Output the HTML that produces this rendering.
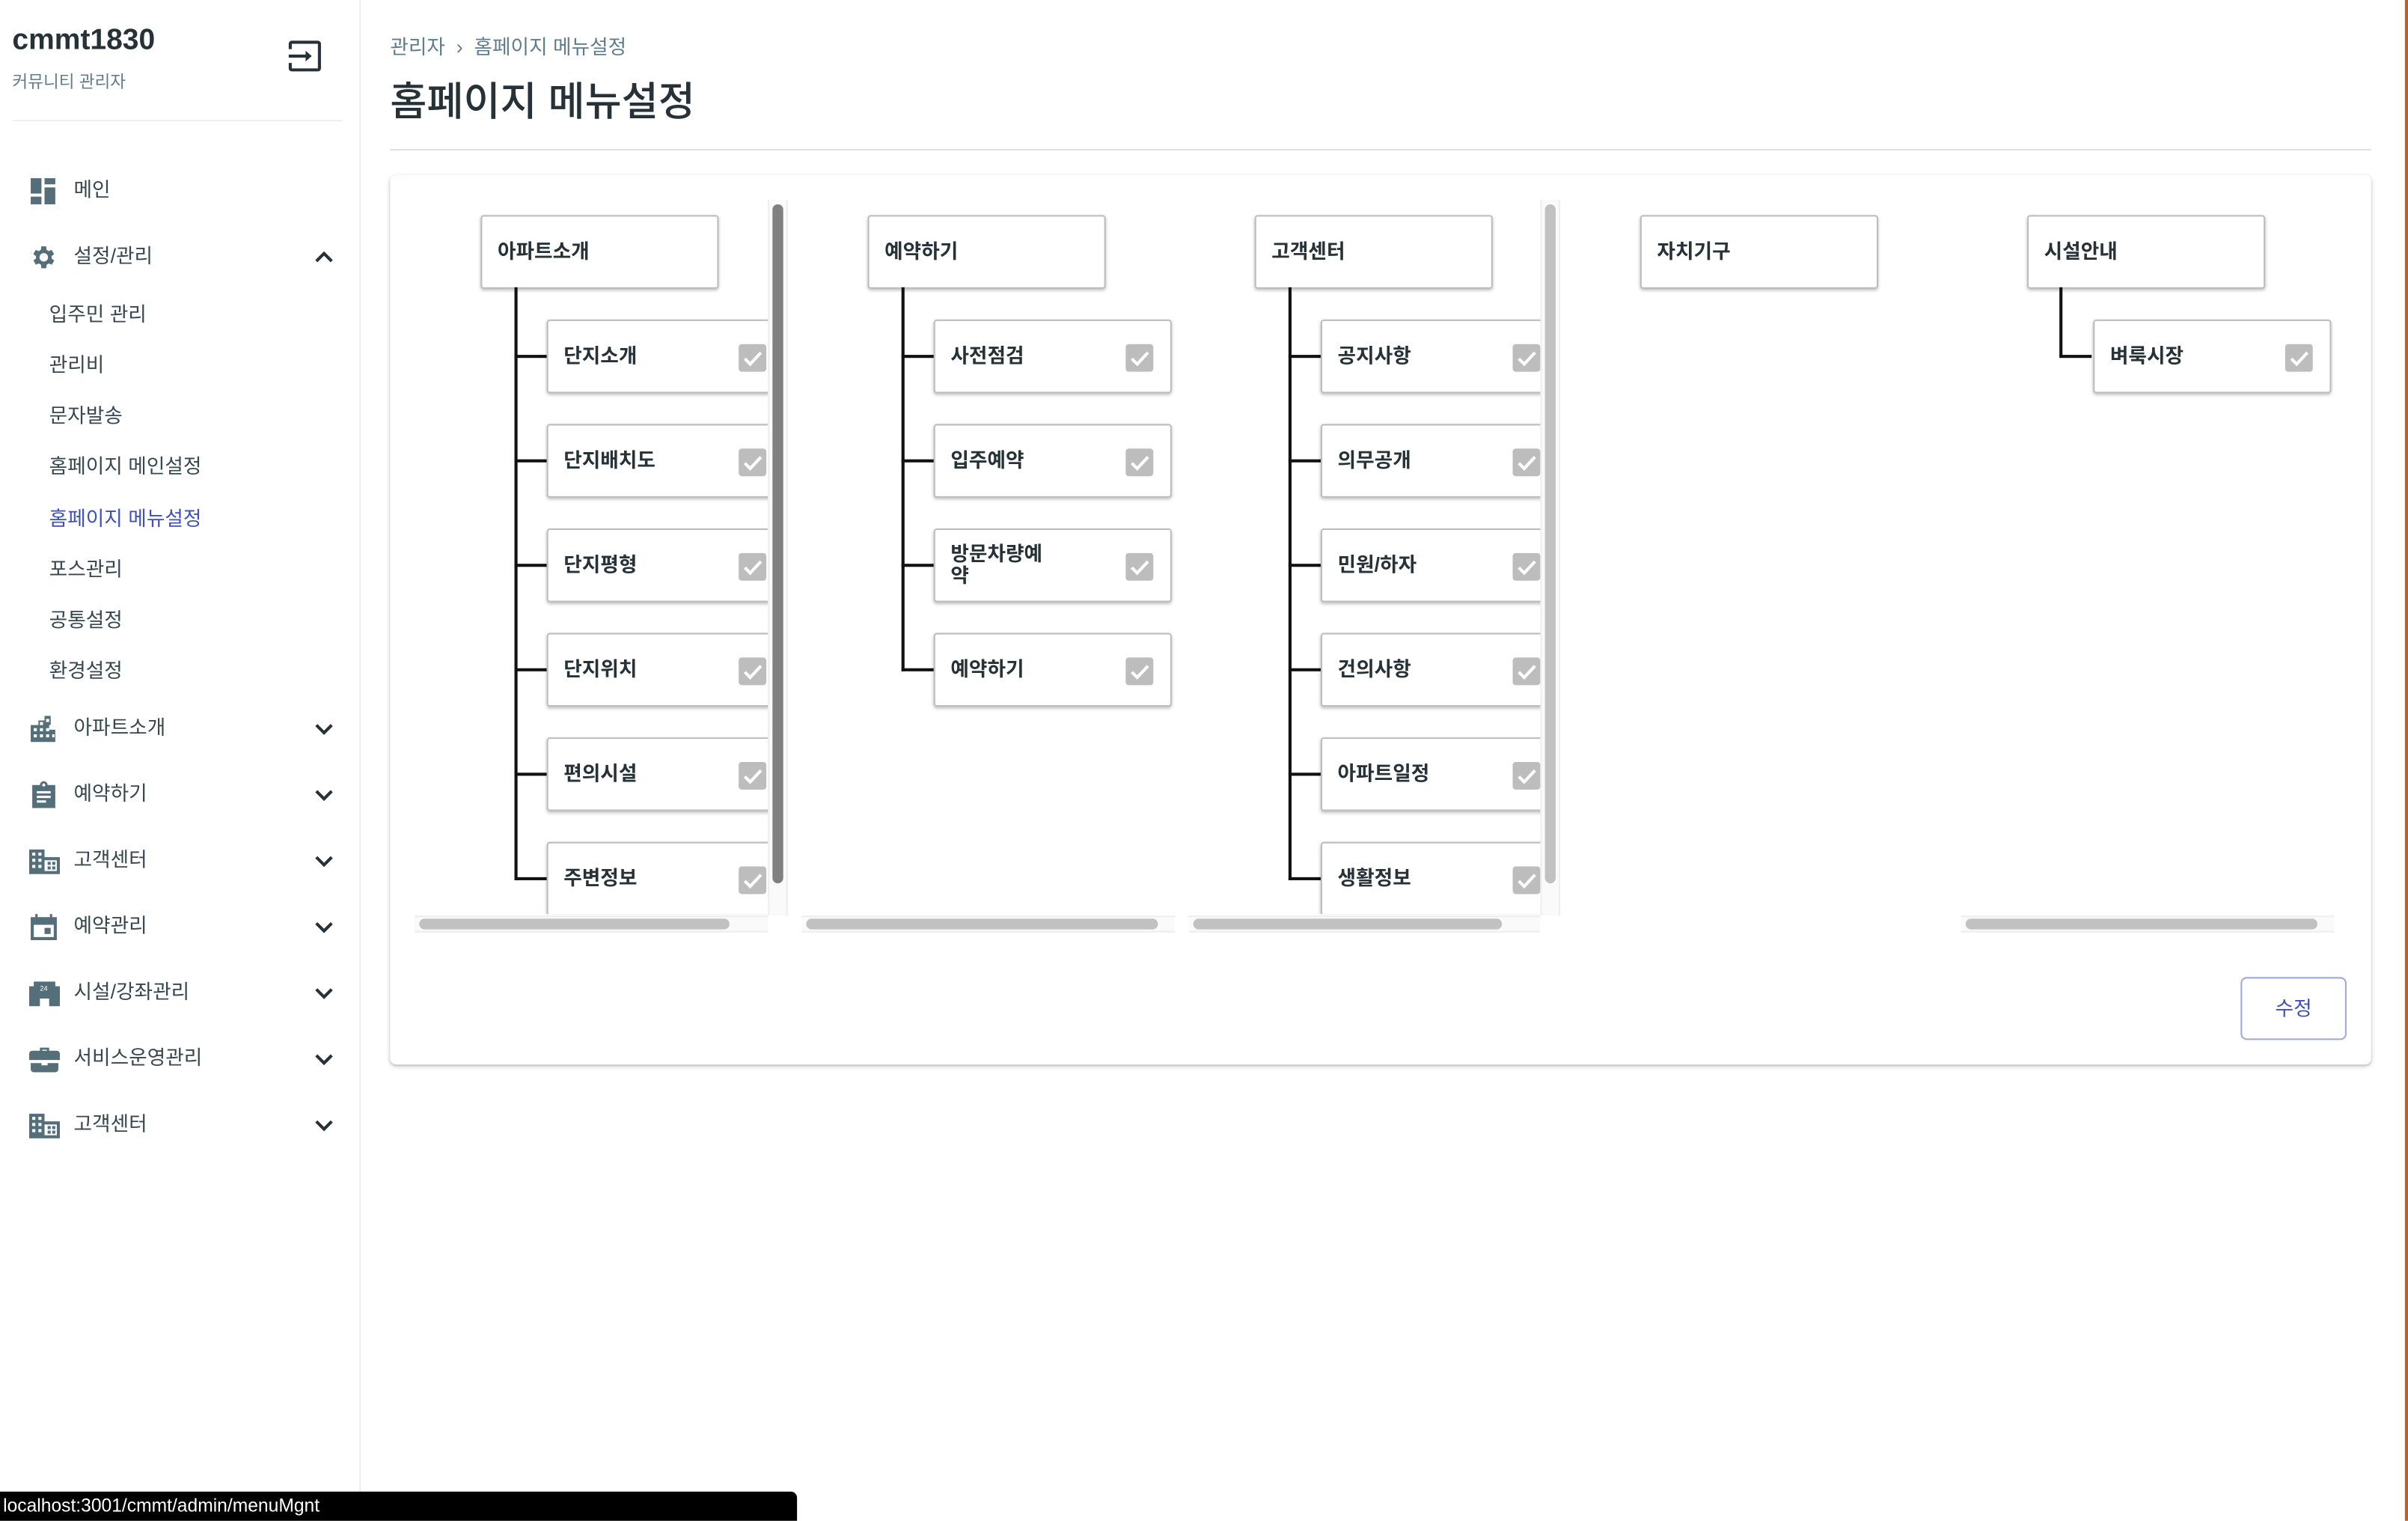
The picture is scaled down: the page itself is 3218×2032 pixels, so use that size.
<!DOCTYPE html>
<html><head><meta charset="utf-8">
<style>
*{box-sizing:border-box;margin:0;padding:0}
html,body{width:3218px;height:2032px;overflow:hidden;background:#fff}
#w{position:absolute;left:0;top:0;width:1568px;height:990px;transform:scale(2.05230);transform-origin:0 0;font-family:"Liberation Sans","Noto Sans CJK KR",sans-serif;color:#263238}
.a{position:absolute}
.side{left:0;top:0;width:235px;height:990px;border-right:1px solid #eee}
.mi{position:absolute;left:48px;font-size:13px;color:#37474f;line-height:16px}
.ic{position:absolute;left:19px;width:19px;height:19px}
.sub{position:absolute;left:32px;font-size:13px;color:#37474f;line-height:16px}
.chev{position:absolute;left:204px;width:14px;height:10px}
.col{position:absolute;top:130px;height:465px;overflow:hidden}
.box{position:absolute;width:155px;height:48px;background:#fff;border:1px solid #bdbdbd;border-radius:2px;box-shadow:0 1px 2px rgba(0,0,0,.25);font-size:13px;font-weight:bold;color:#263238}
.box span{position:absolute;left:10px;top:50%;transform:translateY(-50%);width:62px;line-height:14px}
.cb{position:absolute;left:124px;top:15px;width:18px;height:18px;background:#bdbdbd;border-radius:2px}
.vl{position:absolute;width:1.5px;background:#111}
.hl{position:absolute;height:1.5px;background:#111;width:21px}
.ht{position:absolute;top:596px;height:11px;background:#fafafa;border-top:1px solid #eee;border-bottom:1px solid #eee}
.th{position:absolute;top:598px;height:7px;border-radius:4px;background:#c1c1c1}
.vt{position:absolute;top:130px;width:13px;height:466px;background:#fafafa;border-left:1px solid #eee;border-right:1px solid #eee}
</style></head><body><div id="w">
<div class="a side">
<div class="a" style="left:8px;top:16px;font-size:19px;font-weight:bold;color:#263238">cmmt1830</div>
<div class="a" style="left:8px;top:45px;font-size:11px;color:#607d8b">커뮤니티 관리자</div>
<svg class="a" style="left:186px;top:25px" width="26" height="24" viewBox="0 0 26 24"><path d="M3 7V3.5a1 1 0 0 1 1-1h17a1 1 0 0 1 1 1v16a1 1 0 0 1-1 1H4a1 1 0 0 1-1-1V16" fill="none" stroke="#263238" stroke-width="2"/><path d="M2 11.5h12" stroke="#263238" stroke-width="2"/><path d="M13 8l4 3.5-4 3.5z" fill="#263238"/></svg>
<div class="a" style="left:8px;top:78px;width:215px;height:1px;background:#eee"></div>

<svg class="ic" style="top:115px" viewBox="0 0 19 19" fill="#546e7a"><rect x="1" y="1" width="7" height="10"/><rect x="10" y="1" width="7" height="4"/><rect x="10" y="7" width="7" height="11"/><rect x="1" y="13" width="7" height="5"/></svg>
<div class="mi" style="top:116px">메인</div>

<svg class="ic" style="top:158px" viewBox="0 0 24 24" fill="#546e7a"><path d="M19.4 13a7.5 7.5 0 0 0 0-2l2.1-1.6-2-3.5-2.5 1a7.6 7.6 0 0 0-1.7-1L15 3h-4l-.4 2.9a7.6 7.6 0 0 0-1.7 1l-2.5-1-2 3.5L6.6 11a7.5 7.5 0 0 0 0 2l-2.1 1.6 2 3.5 2.5-1a7.6 7.6 0 0 0 1.7 1L11 21h4l.4-2.9a7.6 7.6 0 0 0 1.7-1l2.5 1 2-3.5zM13 15.5a3.5 3.5 0 1 1 0-7 3.5 3.5 0 0 1 0 7z" transform="translate(-1 0)"/></svg>
<div class="mi" style="top:159px">설정/관리</div>
<svg class="chev" style="top:162px" viewBox="0 0 14 10"><path d="M2 8l5-5 5 5" fill="none" stroke="#263238" stroke-width="2"/></svg>

<div class="sub" style="top:197px">입주민 관리</div>
<div class="sub" style="top:230px">관리비</div>
<div class="sub" style="top:263px">문자발송</div>
<div class="sub" style="top:296px">홈페이지 메인설정</div>
<div class="sub" style="top:330px;color:#3f51b5">홈페이지 메뉴설정</div>
<div class="sub" style="top:363px">포스관리</div>
<div class="sub" style="top:396px">공통설정</div>
<div class="sub" style="top:429px">환경설정</div>

<svg class="ic" style="top:465px" viewBox="0 0 19 19" fill="#546e7a"><path d="M1 7h5V4h4V1h4v6h-1v3h4v8H1z"/><g fill="#fff"><rect x="3" y="9" width="2" height="2"/><rect x="7" y="9" width="2" height="2"/><rect x="11" y="9" width="2" height="2"/><rect x="3" y="13" width="2" height="2"/><rect x="7" y="13" width="2" height="2"/><rect x="11" y="13" width="2" height="2"/><rect x="15" y="13" width="1.5" height="2"/><rect x="7" y="5" width="2" height="2"/><rect x="11" y="3" width="2" height="2"/></g></svg>
<div class="mi" style="top:466px">아파트소개</div>
<svg class="chev" style="top:470px" viewBox="0 0 14 10"><path d="M2 2l5 5 5-5" fill="none" stroke="#263238" stroke-width="2"/></svg>

<svg class="ic" style="top:508px" viewBox="0 0 19 19" fill="#546e7a"><path d="M2 3h5a2.5 2.5 0 0 1 5 0h5v15H2z"/><g fill="#fff"><circle cx="9.5" cy="3" r="1"/><rect x="5" y="7" width="9" height="1.5"/><rect x="5" y="10" width="9" height="1.5"/><rect x="5" y="13" width="6" height="1.5"/></g></svg>
<div class="mi" style="top:509px">예약하기</div>
<svg class="chev" style="top:513px" viewBox="0 0 14 10"><path d="M2 2l5 5 5-5" fill="none" stroke="#263238" stroke-width="2"/></svg>

<svg class="ic" style="top:551px;width:20px" viewBox="0 0 20 19" fill="#546e7a"><path d="M0 2h10v5h10v11H0z"/><g fill="#fff"><rect x="2" y="4" width="2" height="2"/><rect x="6" y="4" width="2" height="2"/><rect x="2" y="8" width="2" height="2"/><rect x="6" y="8" width="2" height="2"/><rect x="2" y="12" width="2" height="2"/><rect x="6" y="12" width="2" height="2"/><rect x="10" y="9" width="8" height="7"/></g><g><rect x="12" y="10" width="2" height="2"/><rect x="15" y="10" width="2" height="2"/><rect x="12" y="13" width="2" height="2"/><rect x="15" y="13" width="2" height="2"/></g></svg>
<div class="mi" style="top:552px">고객센터</div>
<svg class="chev" style="top:556px" viewBox="0 0 14 10"><path d="M2 2l5 5 5-5" fill="none" stroke="#263238" stroke-width="2"/></svg>

<svg class="ic" style="top:594px" viewBox="0 0 19 19" fill="#546e7a"><path d="M1 3h3V1h1.5v2h8V1H15v2h3v15H1zM3 8v8h13V8z"/><rect x="10" y="10" width="4" height="4"/></svg>
<div class="mi" style="top:595px">예약관리</div>
<svg class="chev" style="top:599px" viewBox="0 0 14 10"><path d="M2 2l5 5 5-5" fill="none" stroke="#263238" stroke-width="2"/></svg>

<svg class="ic" style="top:637px;width:20px" viewBox="0 0 20 19" fill="#546e7a"><path d="M0 5h3V2h14v3h3v13h-7v-5H7v5H0z"/><text x="7" y="8" font-size="4.5" fill="#fff" font-family="Liberation Sans">24</text></svg>
<div class="mi" style="top:638px">시설/강좌관리</div>
<svg class="chev" style="top:642px" viewBox="0 0 14 10"><path d="M2 2l5 5 5-5" fill="none" stroke="#263238" stroke-width="2"/></svg>

<svg class="ic" style="top:680px;width:20px" viewBox="0 0 20 19" fill="#546e7a"><path d="M7 2h6v2h5a2 2 0 0 1 2 2v4H0V6a2 2 0 0 1 2-2h5zM8.5 3.3V4h3v-.7zM1 12h7v1.5h4V12h7v4a2 2 0 0 1-2 2H3a2 2 0 0 1-2-2z"/></svg>
<div class="mi" style="top:681px">서비스운영관리</div>
<svg class="chev" style="top:685px" viewBox="0 0 14 10"><path d="M2 2l5 5 5-5" fill="none" stroke="#263238" stroke-width="2"/></svg>

<svg class="ic" style="top:723px;width:20px" viewBox="0 0 20 19" fill="#546e7a"><path d="M0 2h10v5h10v11H0z"/><g fill="#fff"><rect x="2" y="4" width="2" height="2"/><rect x="6" y="4" width="2" height="2"/><rect x="2" y="8" width="2" height="2"/><rect x="6" y="8" width="2" height="2"/><rect x="2" y="12" width="2" height="2"/><rect x="6" y="12" width="2" height="2"/><rect x="10" y="9" width="8" height="7"/></g><g><rect x="12" y="10" width="2" height="2"/><rect x="15" y="10" width="2" height="2"/><rect x="12" y="13" width="2" height="2"/><rect x="15" y="13" width="2" height="2"/></g></svg>
<div class="mi" style="top:724px">고객센터</div>
<svg class="chev" style="top:728px" viewBox="0 0 14 10"><path d="M2 2l5 5 5-5" fill="none" stroke="#263238" stroke-width="2"/></svg>
</div>

<div class="a" style="left:254px;top:20px;font-size:13px;color:#607d8b">관리자 &nbsp;›&nbsp; 홈페이지 메뉴설정</div>
<div class="a" style="left:254px;top:46px;font-size:26px;font-weight:500;color:#263238">홈페이지 메뉴설정</div>
<div class="a" style="left:254px;top:97px;width:1290px;height:1px;background:#e0e0e0"></div>

<div class="a" style="left:254px;top:114px;width:1290px;height:579px;background:#fff;border-radius:4px;box-shadow:0 1px 3px rgba(0,0,0,.2),0 1px 1px rgba(0,0,0,.1)"></div>

<!-- col1 -->
<div class="col" style="left:270px;width:230px">
 <div class="box" style="left:43px;top:10px"><span>아파트소개</span></div>
 <div class="vl" style="left:65px;top:57px;height:386px"></div>
 <div class="hl" style="left:65px;top:101px"></div><div class="box" style="left:86px;top:78px"><span>단지소개</span><svg class="cb" viewBox="0 0 18 18"><path d="M4 9.5l3.5 3.5L14.5 5.5" fill="none" stroke="#fff" stroke-width="2"/></svg></div>
 <div class="hl" style="left:65px;top:169px"></div><div class="box" style="left:86px;top:146px"><span>단지배치도</span><svg class="cb" viewBox="0 0 18 18"><path d="M4 9.5l3.5 3.5L14.5 5.5" fill="none" stroke="#fff" stroke-width="2"/></svg></div>
 <div class="hl" style="left:65px;top:237px"></div><div class="box" style="left:86px;top:214px"><span>단지평형</span><svg class="cb" viewBox="0 0 18 18"><path d="M4 9.5l3.5 3.5L14.5 5.5" fill="none" stroke="#fff" stroke-width="2"/></svg></div>
 <div class="hl" style="left:65px;top:305px"></div><div class="box" style="left:86px;top:282px"><span>단지위치</span><svg class="cb" viewBox="0 0 18 18"><path d="M4 9.5l3.5 3.5L14.5 5.5" fill="none" stroke="#fff" stroke-width="2"/></svg></div>
 <div class="hl" style="left:65px;top:373px"></div><div class="box" style="left:86px;top:350px"><span>편의시설</span><svg class="cb" viewBox="0 0 18 18"><path d="M4 9.5l3.5 3.5L14.5 5.5" fill="none" stroke="#fff" stroke-width="2"/></svg></div>
 <div class="hl" style="left:65px;top:441px"></div><div class="box" style="left:86px;top:418px"><span>주변정보</span><svg class="cb" viewBox="0 0 18 18"><path d="M4 9.5l3.5 3.5L14.5 5.5" fill="none" stroke="#fff" stroke-width="2"/></svg></div>
</div>
<div class="vt" style="left:500px"></div>
<div class="a" style="left:503px;top:133px;width:7px;height:442px;border-radius:4px;background:#808080"></div>
<div class="ht" style="left:270px;width:230px"></div><div class="th" style="left:273px;width:202px"></div>

<!-- col2 -->
<div class="col" style="left:522px;width:243px">
 <div class="box" style="left:43px;top:10px"><span>예약하기</span></div>
 <div class="vl" style="left:65px;top:57px;height:250px"></div>
 <div class="hl" style="left:65px;top:101px"></div><div class="box" style="left:86px;top:78px"><span>사전점검</span><svg class="cb" viewBox="0 0 18 18"><path d="M4 9.5l3.5 3.5L14.5 5.5" fill="none" stroke="#fff" stroke-width="2"/></svg></div>
 <div class="hl" style="left:65px;top:169px"></div><div class="box" style="left:86px;top:146px"><span>입주예약</span><svg class="cb" viewBox="0 0 18 18"><path d="M4 9.5l3.5 3.5L14.5 5.5" fill="none" stroke="#fff" stroke-width="2"/></svg></div>
 <div class="hl" style="left:65px;top:237px"></div><div class="box" style="left:86px;top:214px"><span>방문차량예<br>약</span><svg class="cb" viewBox="0 0 18 18"><path d="M4 9.5l3.5 3.5L14.5 5.5" fill="none" stroke="#fff" stroke-width="2"/></svg></div>
 <div class="hl" style="left:65px;top:305px"></div><div class="box" style="left:86px;top:282px"><span>예약하기</span><svg class="cb" viewBox="0 0 18 18"><path d="M4 9.5l3.5 3.5L14.5 5.5" fill="none" stroke="#fff" stroke-width="2"/></svg></div>
</div>
<div class="ht" style="left:522px;width:243px"></div><div class="th" style="left:525px;width:229px"></div>

<!-- col3 -->
<div class="col" style="left:774px;width:229px">
 <div class="box" style="left:43px;top:10px"><span>고객센터</span></div>
 <div class="vl" style="left:65px;top:57px;height:386px"></div>
 <div class="hl" style="left:65px;top:101px"></div><div class="box" style="left:86px;top:78px"><span>공지사항</span><svg class="cb" viewBox="0 0 18 18"><path d="M4 9.5l3.5 3.5L14.5 5.5" fill="none" stroke="#fff" stroke-width="2"/></svg></div>
 <div class="hl" style="left:65px;top:169px"></div><div class="box" style="left:86px;top:146px"><span>의무공개</span><svg class="cb" viewBox="0 0 18 18"><path d="M4 9.5l3.5 3.5L14.5 5.5" fill="none" stroke="#fff" stroke-width="2"/></svg></div>
 <div class="hl" style="left:65px;top:237px"></div><div class="box" style="left:86px;top:214px"><span>민원/하자</span><svg class="cb" viewBox="0 0 18 18"><path d="M4 9.5l3.5 3.5L14.5 5.5" fill="none" stroke="#fff" stroke-width="2"/></svg></div>
 <div class="hl" style="left:65px;top:305px"></div><div class="box" style="left:86px;top:282px"><span>건의사항</span><svg class="cb" viewBox="0 0 18 18"><path d="M4 9.5l3.5 3.5L14.5 5.5" fill="none" stroke="#fff" stroke-width="2"/></svg></div>
 <div class="hl" style="left:65px;top:373px"></div><div class="box" style="left:86px;top:350px"><span>아파트일정</span><svg class="cb" viewBox="0 0 18 18"><path d="M4 9.5l3.5 3.5L14.5 5.5" fill="none" stroke="#fff" stroke-width="2"/></svg></div>
 <div class="hl" style="left:65px;top:441px"></div><div class="box" style="left:86px;top:418px"><span>생활정보</span><svg class="cb" viewBox="0 0 18 18"><path d="M4 9.5l3.5 3.5L14.5 5.5" fill="none" stroke="#fff" stroke-width="2"/></svg></div>
</div>
<div class="vt" style="left:1003px"></div>
<div class="a" style="left:1006px;top:133px;width:7px;height:442px;border-radius:4px;background:#c1c1c1"></div>
<div class="ht" style="left:774px;width:229px"></div><div class="th" style="left:777px;width:201px"></div>

<!-- col4 -->
<div class="col" style="left:1026px;width:243px">
 <div class="box" style="left:42px;top:10px"><span>자치기구</span></div>
</div>

<!-- col5 -->
<div class="col" style="left:1277px;width:243px">
 <div class="box" style="left:43px;top:10px"><span>시설안내</span></div>
 <div class="vl" style="left:64px;top:57px;height:45px"></div>
 <div class="hl" style="left:64px;top:101px"></div><div class="box" style="left:86px;top:78px"><span>벼룩시장</span><svg class="cb" viewBox="0 0 18 18"><path d="M4 9.5l3.5 3.5L14.5 5.5" fill="none" stroke="#fff" stroke-width="2"/></svg></div>
</div>
<div class="ht" style="left:1277px;width:243px"></div><div class="th" style="left:1280px;width:229px"></div>

<div class="a" style="left:1459px;top:636px;width:69px;height:41px;border:1px solid #9fa8da;border-radius:4px;color:#3f51b5;font-size:13px;text-align:center;line-height:39px">수정</div>

<div class="a" style="left:1566px;top:0;width:2px;height:990px;background:#b5652c"></div>
<div class="a" style="left:0;top:971px;width:519px;height:19px;background:#000;border-top-right-radius:4px;color:#fff;font-size:12px;line-height:19px;padding-left:2px">localhost:3001/cmmt/admin/menuMgnt</div>
</div></body></html>
